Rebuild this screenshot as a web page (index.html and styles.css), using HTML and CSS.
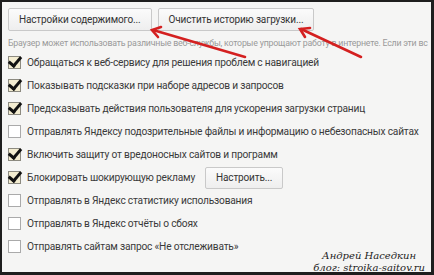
FILE: index.html
```html
<!DOCTYPE html>
<html lang="ru">
<head>
<meta charset="utf-8">
<link rel="stylesheet" href="styles.css">
</head>
<body>
<div class="frame">
  <div class="buttons">
    <button class="btn">Настройки содержимого...</button>
    <button class="btn">Очистить историю загрузки...</button>
  </div>
  <p class="desc">Браузер может использовать различные веб-службы, которые упрощают работу в интернете. Если эти вс</p>
  <ul class="opts">
    <li class="opt"><span class="cb on"></span>Обращаться к веб-сервису для решения проблем с навигацией</li>
    <li class="opt"><span class="cb on"></span>Показывать подсказки при наборе адресов и запросов</li>
    <li class="opt"><span class="cb on"></span>Предсказывать действия пользователя для ускорения загрузки страниц</li>
    <li class="opt"><span class="cb"></span>Отправлять Яндексу подозрительные файлы и информацию о небезопасных сайтах</li>
    <li class="opt"><span class="cb on"></span>Включить защиту от вредоносных сайтов и программ</li>
    <li class="opt"><span class="cb on"></span>Блокировать шокирующую рекламу<button class="btn small">Настроить...</button></li>
    <li class="opt"><span class="cb"></span>Отправлять в Яндекс статистику использования</li>
    <li class="opt"><span class="cb"></span>Отправлять в Яндекс отчёты о сбоях</li>
    <li class="opt"><span class="cb"></span>Отправлять сайтам запрос «Не отслеживать»</li>
  </ul>
  <svg class="arrows" width="434" height="275" viewBox="0 0 434 275">
    <g stroke="#d42020" stroke-width="2.6" stroke-linecap="round" fill="none">
      <line x1="245" y1="57" x2="153" y2="30"/>
      <path d="M161 27 L152 30 L158 37"/>
      <line x1="361" y1="57" x2="301" y2="29"/>
      <path d="M310 28 L300 29 L305 37"/>
    </g>
  </svg>
  <div class="sign">
    <div>Андрей Наседкин</div>
    <div>блог: stroika-saitov.ru</div>
  </div>
</div>
</body>
</html>
```
FILE: styles.css
```css
html, body {
  margin: 0;
  padding: 0;
}
body {
  width: 434px;
  height: 275px;
  overflow: hidden;
  background: #1c1c1c;
  font-family: Roboto, "Noto Sans", sans-serif;
}
.frame {
  position: relative;
  box-sizing: border-box;
  width: 434px;
  height: 275px;
  border-style: solid;
  border-color: #1e1e1e;
  border-width: 2px 3px 3px 2px;
  background: #f5f5f4;
  padding: 6px 0 0 6px;
  overflow: hidden;
}
.buttons {
  display: flex;
  gap: 6px;
}
.btn {
  font-family: inherit;
  font-size: 10px;
  letter-spacing: -0.15px;
  color: #333;
  height: 23px;
  padding: 0 10px;
  border: 1px solid #c9c9c9;
  border-radius: 2px;
  background: linear-gradient(#fbfbfb, #eeeeee);
  white-space: nowrap;
}
.desc {
  margin: 6px 0 0 0;
  font-size: 8.8px;
  letter-spacing: -0.2px;
  line-height: 13px;
  color: #9a9a9a;
  white-space: nowrap;
  overflow: hidden;
}
.opts {
  list-style: none;
  margin: 1px 0 0 0;
  padding: 0;
}
.opt {
  display: flex;
  align-items: center;
  height: 23px;
  font-size: 10.2px;
  letter-spacing: -0.2px;
  color: #3a3a3a;
  white-space: nowrap;
}
.cb {
  position: relative;
  box-sizing: border-box;
  width: 13px;
  height: 13px;
  margin: 0 6px 0 0;
  border: 1px solid #aaa;
  background: #fff;
  flex: none;
}
.cb.on {
  background: #f3ecd0;
  border-color: #8c8a80;
}
.cb.on::after {
  content: "";
  position: absolute;
  left: 2px;
  top: -3px;
  width: 5px;
  height: 10px;
  border: solid #111;
  border-width: 0 3px 3px 0;
  transform: rotate(40deg);
}
.btn.small {
  margin-left: 10px;
  height: 22px;
  padding: 0 10px;
}
.arrows {
  position: absolute;
  left: -2px;
  top: -2px;
  pointer-events: none;
}
.sign {
  position: absolute;
  right: 6px;
  bottom: -2px;
  font-family: "DejaVu Serif", serif;
  font-style: italic;
  font-size: 10px;
  line-height: 12px;
  color: #222;
  text-align: center;
}
```
